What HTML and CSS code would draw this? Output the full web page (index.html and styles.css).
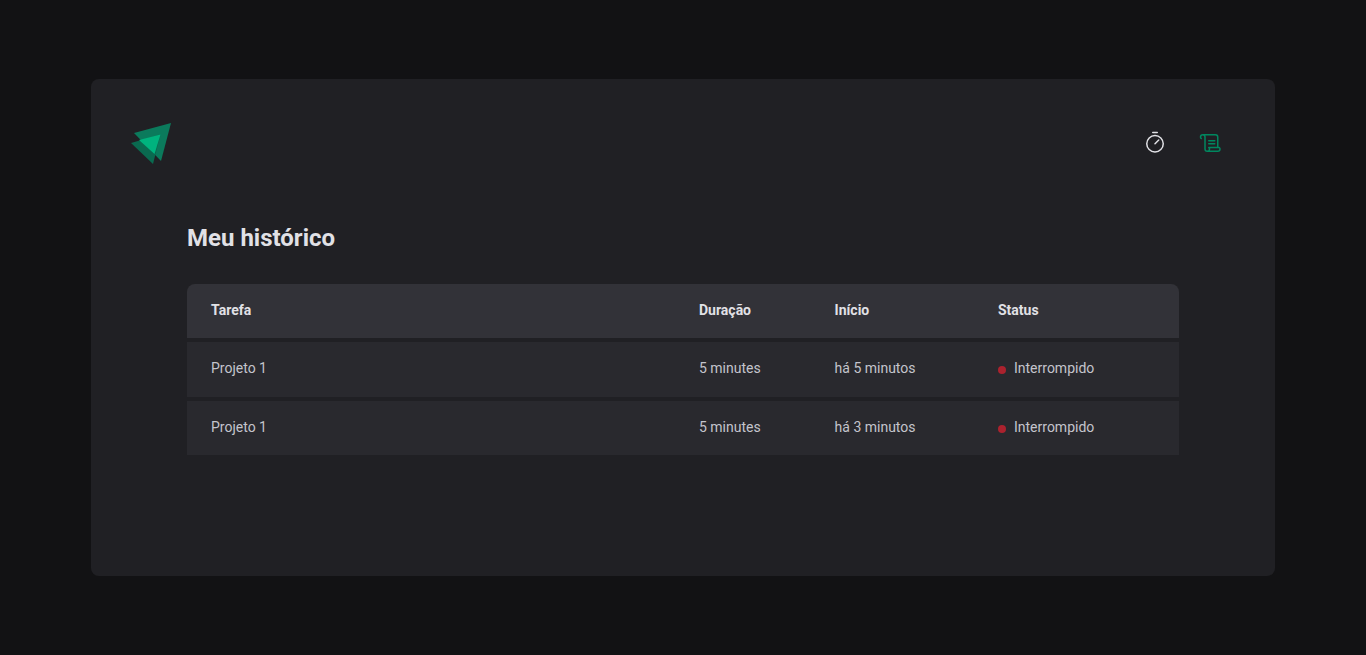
FILE: index.html
```html
<!DOCTYPE html>
<html lang="pt-BR">
<head>
<meta charset="utf-8">
<title>Meu histórico</title>
<link rel="stylesheet" href="styles.css">
</head>
<body>
<div class="layout">
  <header class="header">
    <svg class="logo" width="41" height="41" viewBox="0 0 41 41" aria-label="Logo">
      <polygon class="logo-dark" points="40,0 3,10 30,38"/>
      <polygon class="logo-mid" points="0,20 29.5,11.5 22,41"/>
      <polygon class="logo-light" points="8,17 29.5,11.5 23.5,31"/>
    </svg>
    <nav class="nav">
      <a class="nav-link" href="#" title="Timer">
        <svg width="24" height="24" viewBox="0 0 256 256" fill="currentColor"><path d="M128,40a96,96,0,1,0,96,96A96.11,96.11,0,0,0,128,40Zm0,176a80,80,0,1,1,80-80A80.09,80.09,0,0,1,128,216ZM173.66,90.34a8,8,0,0,1,0,11.32l-40,40a8,8,0,0,1-11.32-11.32l40-40A8,8,0,0,1,173.66,90.34ZM96,16a8,8,0,0,1,8-8h48a8,8,0,0,1,0,16H104A8,8,0,0,1,96,16Z"/></svg>
      </a>
      <a class="nav-link nav-link-active" href="#" title="Histórico">
        <svg width="24" height="24" viewBox="0 0 256 256" fill="currentColor"><path d="M96,104a8,8,0,0,1,8-8h64a8,8,0,0,1,0,16H104A8,8,0,0,1,96,104Zm8,40h64a8,8,0,0,0,0-16H104a8,8,0,0,0,0,16Zm128,48a32,32,0,0,1-32,32H88a32,32,0,0,1-32-32V64a16,16,0,0,0-32,0c0,5.74,4.83,9.62,4.88,9.66h0A8,8,0,0,1,24,88a7.89,7.89,0,0,1-4.79-1.61h0C18.05,85.54,8,77.61,8,64A32,32,0,0,1,40,32H176a32,32,0,0,1,32,32V168h8a8,8,0,0,1,4.8,1.6C222,170.46,232,178.39,232,192ZM96.26,173.48A8.07,8.07,0,0,1,104,168h88V64a16,16,0,0,0-16-16H67.69A31.71,31.71,0,0,1,72,64V192a16,16,0,0,0,32,0c0-5.74-4.83-9.62-4.88-9.66A7.82,7.82,0,0,1,96.26,173.48ZM216,192a12.58,12.58,0,0,0-3.23-8h-94a26.92,26.92,0,0,1,1.21,8,31.82,31.82,0,0,1-4.29,16H200A16,16,0,0,0,216,192Z"/></svg>
      </a>
    </nav>
  </header>
  <main class="history">
    <h1 class="title">Meu histórico</h1>
    <table class="table">
      <thead>
        <tr>
          <th class="col-task">Tarefa</th>
          <th class="col-duration">Duração</th>
          <th class="col-start">Início</th>
          <th class="col-status">Status</th>
        </tr>
      </thead>
      <tbody>
        <tr>
          <td>Projeto 1</td>
          <td>5 minutes</td>
          <td>há 5 minutos</td>
          <td><span class="status"><span class="dot"></span>Interrompido</span></td>
        </tr>
        <tr>
          <td>Projeto 1</td>
          <td>5 minutes</td>
          <td>há 3 minutos</td>
          <td><span class="status"><span class="dot"></span>Interrompido</span></td>
        </tr>
      </tbody>
    </table>
  </main>
</div>
</body>
</html>
```

FILE: styles.css
```css
* {
  margin: 0;
  padding: 0;
  box-sizing: border-box;
}

body {
  background: #121214;
  color: #e1e1e6;
  font-family: Roboto, "Liberation Sans", sans-serif;
  font-size: 16px;
  line-height: 1.6;
  height: 655px;
  overflow: hidden;
}

.layout {
  width: 1184px;
  height: 497px;
  margin: 79px auto 0;
  padding: 40px;
  background: #202024;
  border-radius: 8px;
}

.header {
  display: flex;
  align-items: center;
  justify-content: space-between;
  height: 48px;
}

.logo-dark { fill: #0b7a5c; }
.logo-mid { fill: #0a6a50; }
.logo-light { fill: #00b37e; }

.nav {
  display: flex;
  gap: 8px;
}

.nav-link {
  width: 48px;
  height: 48px;
  display: flex;
  align-items: center;
  justify-content: center;
  color: #e1e1e6;
}

.nav-link-active {
  color: #00875f;
}

.history {
  padding: 52px 56px 0;
}

.title {
  font-size: 24px;
  font-weight: 700;
  line-height: 38px;
  color: #e1e1e6;
}

.table {
  width: 992px;
  margin-top: 23px;
  border-collapse: separate;
  border-spacing: 0 4px;
  table-layout: fixed;
  font-size: 14px;
  line-height: 22.4px;
}

.table th {
  background: #323238;
  padding: 15px 16px 17px;
  text-align: left;
  font-weight: 700;
  color: #e1e1e6;
}

.table th:first-child { border-top-left-radius: 8px; padding-left: 24px; }
.table th:last-child { border-top-right-radius: 8px; padding-right: 24px; }

.col-task { width: 496px; }
.col-duration { width: 135.6px; }
.col-start { width: 163.4px; }
.col-status { width: 197px; }

.table td {
  background: #29292e;
  padding: 15px 16px 17px;
  color: #c4c4cc;
}

.table td:first-child { padding-left: 24px; }
.table td:last-child { padding-right: 24px; }

.status {
  display: flex;
  align-items: center;
  gap: 8px;
}

.dot {
  width: 8px;
  height: 8px;
  border-radius: 50%;
  background: #ab222e;
  margin-top: 3px;
}
```
